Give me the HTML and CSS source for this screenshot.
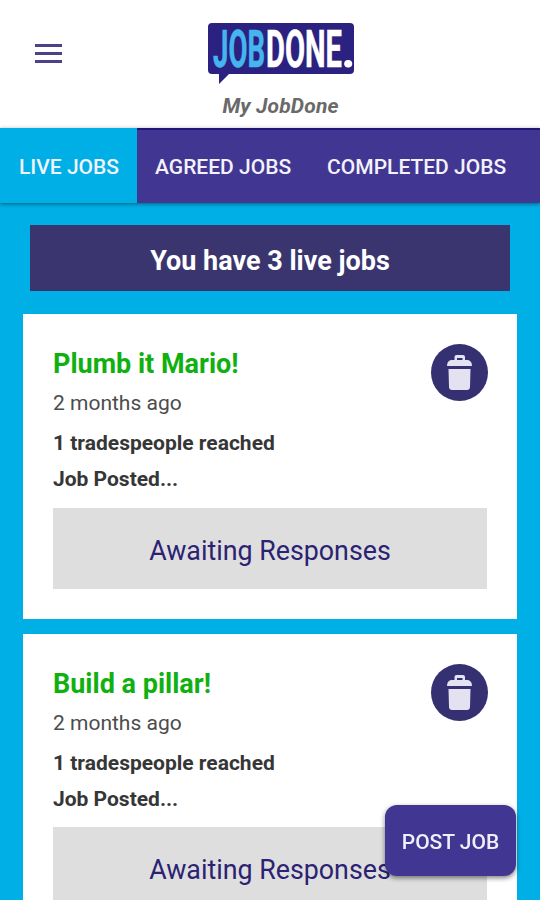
FILE: index.html
```
<!DOCTYPE html>
<html lang="en">
<head>
	<meta charset="UTF-8">
	<meta name="viewport" content="width=device-width, initial-scale=1.0">
	<title>My JobDone</title>
	<link rel="stylesheet" href="styles.css">
</head>
<body>
	<header class="header">
		<button class="menu-button" aria-label="Menu"><span></span><span></span><span></span></button>
		<div class="brand">
			<svg class="logo" width="146" height="62" viewBox="0 0 146 62">
				<path d="M4 0H142Q146 0 146 4V47Q146 51 142 51H21L11 61V51H4Q0 51 0 47V4Q0 0 4 0Z" fill="#2b2180"/>
				<text x="5" y="43.500" textLength="52" lengthAdjust="spacingAndGlyphs" fill="#45b5f0" stroke="#45b5f0">JOB</text>
				<text x="58" y="43.500" textLength="76" lengthAdjust="spacingAndGlyphs" fill="#fff" stroke="#fff">DONE</text>
				<text x="133" y="43.500" fill="#fff">.</text>
			</svg>
			<div class="page-name">My JobDone</div>
		</div>
	</header>
	<nav class="tabs">
		<a class="tab active">LIVE JOBS</a>
		<a class="tab">AGREED JOBS</a>
		<a class="tab">COMPLETED JOBS</a>
	</nav>
	<main class="content">
		<div class="summary">You have 3 live jobs</div>
		<div class="card">
			<div class="card-info">
				<h2>Plumb it Mario!</h2>
				<p class="date">2 months ago</p>
				<p class="detail">1 tradespeople reached</p>
				<p class="detail">Job Posted...</p>
				<button class="delete" aria-label="Delete">
					<svg width="57" height="57" viewBox="0 0 57 57" fill="#e4e2f1">
						<path d="M23.500 16V13Q23.500 11 25.500 11H32Q34 11 34 13V16H37Q41 17 41 22H16Q16 17 20 16ZM26 14V16H31.500V14Z" fill-rule="evenodd"/>
						<path d="M17.500 25H39.500L39 43Q38.800 46 36 46H21Q18.200 46 18 43Z"/>
					</svg>
				</button>
			</div>
			<div class="status">Awaiting Responses</div>
		</div>
		<div class="card">
			<div class="card-info">
				<h2>Build a pillar!</h2>
				<p class="date">2 months ago</p>
				<p class="detail">1 tradespeople reached</p>
				<p class="detail">Job Posted...</p>
				<button class="delete" aria-label="Delete">
					<svg width="57" height="57" viewBox="0 0 57 57" fill="#e4e2f1">
						<path d="M23.500 16V13Q23.500 11 25.500 11H32Q34 11 34 13V16H37Q41 17 41 22H16Q16 17 20 16ZM26 14V16H31.500V14Z" fill-rule="evenodd"/>
						<path d="M17.500 25H39.500L39 43Q38.800 46 36 46H21Q18.200 46 18 43Z"/>
					</svg>
				</button>
			</div>
			<div class="status">Awaiting Responses</div>
		</div>
	</main>
	<button class="post-job">POST JOB</button>
</body>
</html>
```
FILE: styles.css
```
* {
	box-sizing: border-box;
}
body {
	margin: 0;
	height: 900px;
	overflow: hidden;
	font-family: Roboto, sans-serif;
	background-color: #00afe6;
}
button {
	border: none;
	padding: 0;
	font-family: inherit;
	cursor: pointer;
}
.header {
	display: grid;
	grid-template-columns: 97px 1fr 77px;
	height: 128px;
	background-color: #fff;
}
.menu-button {
	display: flex;
	flex-direction: column;
	gap: 5px;
	width: 27px;
	margin: 44px 0 0 35px;
	height: 19px;
	background: none;
}
.menu-button span {
	width: 27px;
	height: 3px;
	background-color: #4b4289;
}
.brand {
	display: flex;
	flex-direction: column;
	align-items: center;
	padding: 23px 0 0 1px;
}
.logo {
	font-size: 51px;
	font-weight: 700;
	stroke-width: 0.6px;
	overflow: visible;
}
.page-name {
	margin-top: 9px;
	font-size: 21px;
	line-height: 25px;
	font-weight: 700;
	font-style: italic;
	letter-spacing: 0.15px;
	color: #696969;
}
.tabs {
	display: flex;
	height: 75px;
	background-color: #413793;
	box-shadow: 0 1px 4px rgba(0, 0, 0, 0.45);
}
.tab {
	padding: 0 18px;
	line-height: 79px;
	font-size: 21px;
	font-weight: 500;
	color: #f3f2fb;
	white-space: nowrap;
}
.tab:not(.active) {
	border-top: 2px solid #251478;
	line-height: 75px;
}
.tab:last-child {
	flex: 1;
}
.tab.active {
	padding-left: 19px;
	background-color: #00afe6;
}
.content {
	padding: 22px 23px 0;
}
.summary {
	height: 66px;
	margin: 0 7px 23px;
	line-height: 72px;
	text-align: center;
	font-size: 27px;
	font-weight: 700;
	color: #fff;
	background-color: #3a356f;
}
.card {
	height: 304.5px;
	margin-bottom: 15px;
	padding: 30px;
	background-color: #fff;
}
.card-info {
	position: relative;
	height: 163.5px;
}
.card h2 {
	margin: 0;
	font-size: 27px;
	line-height: 40px;
	color: #10b010;
}
.card p {
	margin: 0;
	font-size: 21px;
	line-height: 36px;
}
.card .date {
	margin-bottom: 3px;
	line-height: 38px;
	color: #4c4c4c;
}
.card .detail {
	font-weight: 700;
	color: #363636;
}
.delete {
	position: absolute;
	top: 0;
	right: -1px;
	width: 57px;
	height: 57px;
	border-radius: 50%;
	background-color: #353071;
}
.delete svg {
	display: block;
}
.status {
	height: 81px;
	line-height: 87px;
	text-align: center;
	font-size: 26.8px;
	color: #2b2273;
	background-color: #dedede;
}
.post-job {
	position: fixed;
	left: 385px;
	top: 805px;
	width: 131px;
	height: 71px;
	padding-top: 2px;
	border-radius: 12px;
	font-size: 21px;
	font-weight: 500;
	color: #f0effa;
	background-color: #413793;
	box-shadow: 0 2px 5px rgba(0, 0, 0, 0.5);
}
```
